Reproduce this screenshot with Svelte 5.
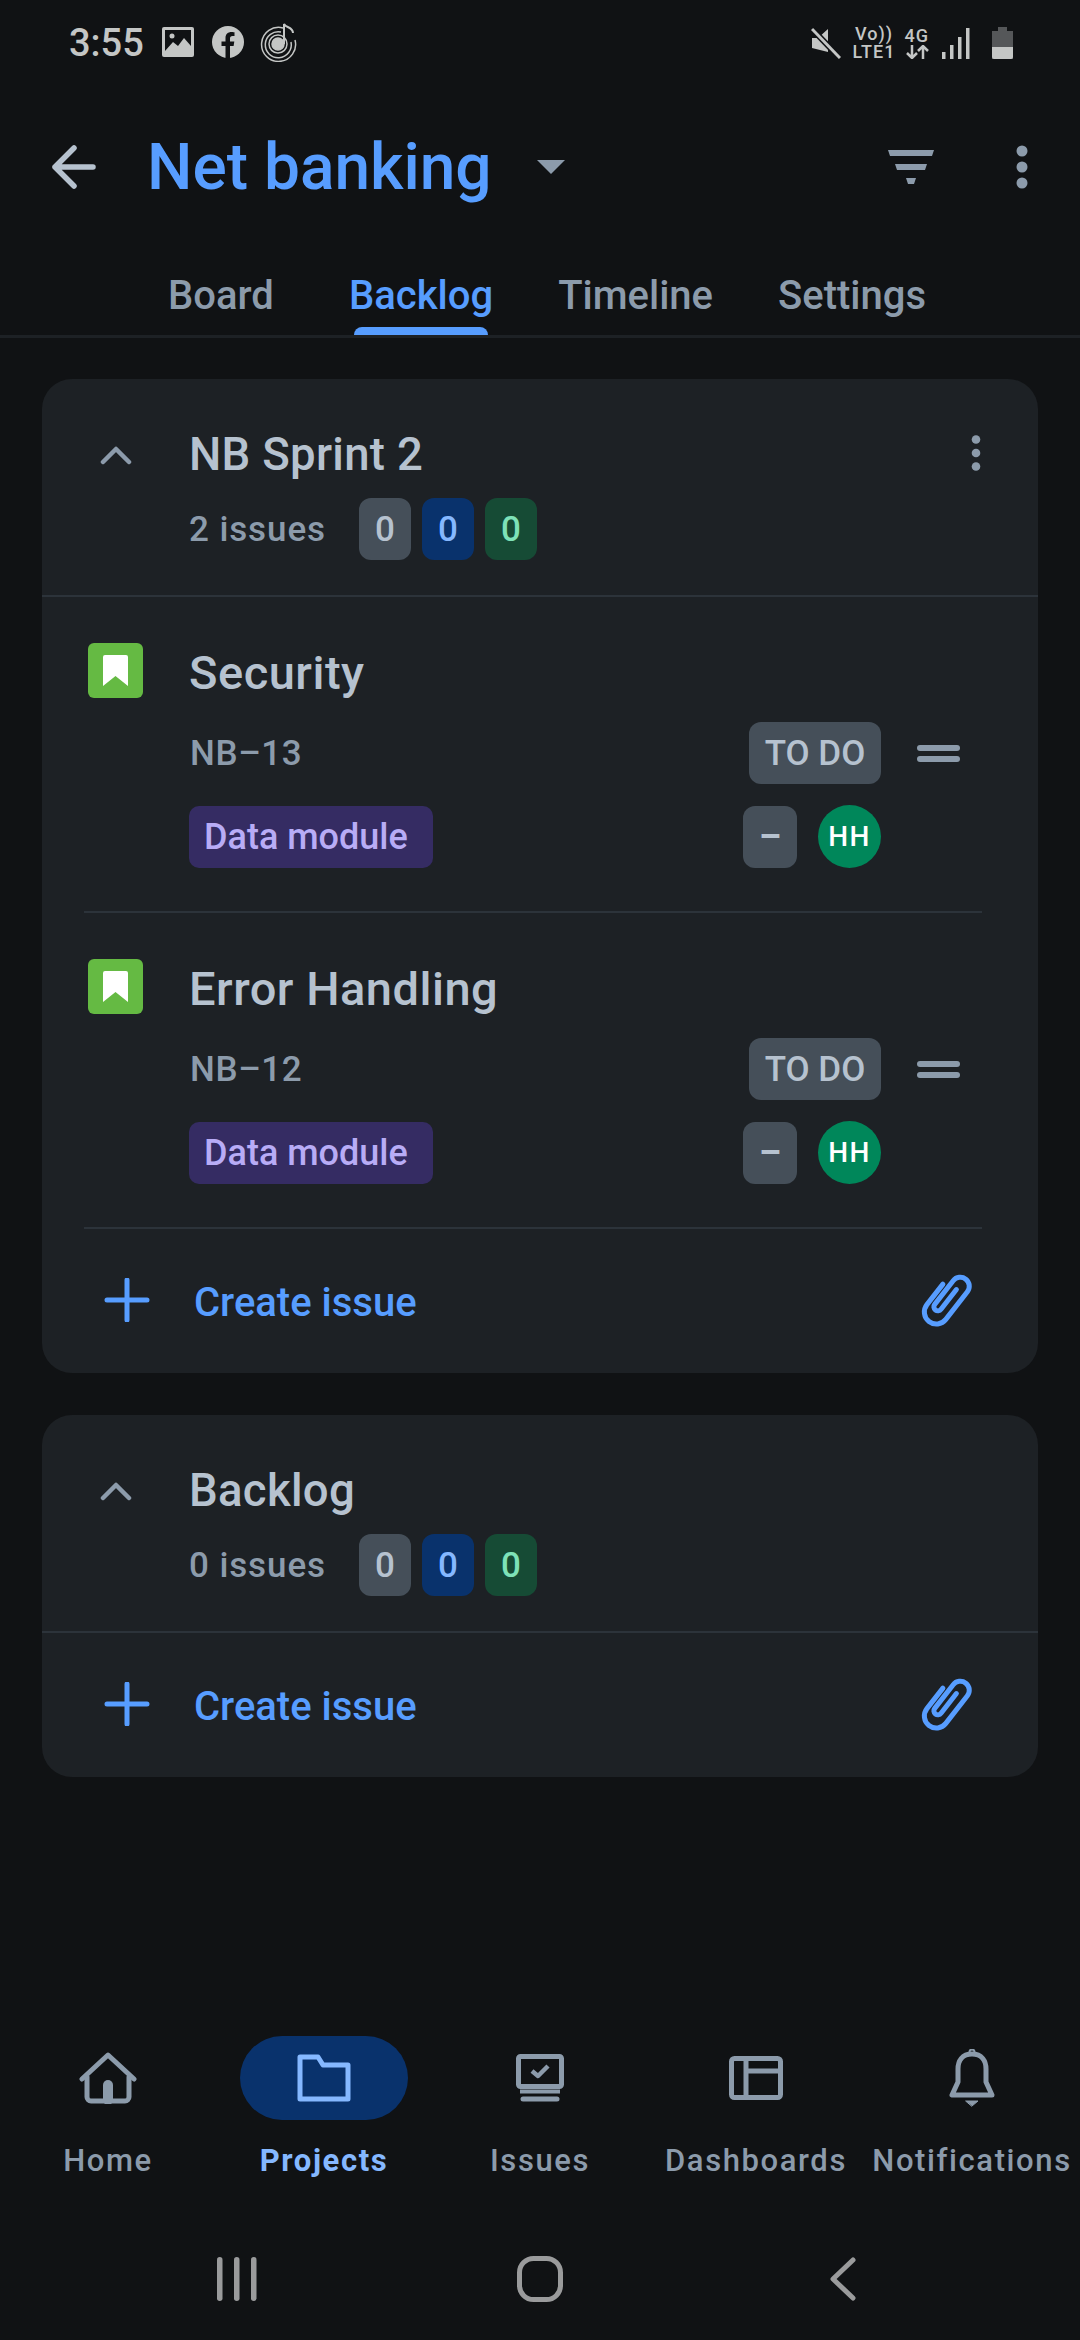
<script>
  const issues = [
    { title: 'Security', key: 'NB–13' },
    { title: 'Error Handling', key: 'NB–12' }
  ];
</script>

{#snippet counts()}
  <span class="count grey">0</span>
  <span class="count blue">0</span>
  <span class="count green">0</span>
{/snippet}

{#snippet createRow()}
  <div class="create">
    <svg class="plus" width="46" height="44" viewBox="0 0 46 44" fill="none" stroke="#579dff" stroke-width="5" stroke-linecap="round">
      <path d="M23 2V42M3 22H43" />
    </svg>
    <span class="create-label">Create issue</span>
    <svg class="clip" width="56" height="56" viewBox="0 0 56 56" fill="none" stroke="#579dff" stroke-width="5" stroke-linecap="round" stroke-linejoin="round">
      <g transform="rotate(38 28 28)">
        <path d="M15 18V44a12 12 0 0 0 24 0V9a9 9 0 0 0 -18 0V39a4 4 0 0 0 8 0V14" transform="translate(0 0)" />
      </g>
    </svg>
  </div>
{/snippet}

{#snippet chevron()}
  <svg class="chev" width="32" height="20" viewBox="0 0 32 20" fill="none" stroke="#8c9bab" stroke-width="4.500" stroke-linecap="round" stroke-linejoin="round">
    <path d="M3 17L16 4L29 17" />
  </svg>
{/snippet}

<div class="page">
  <div class="status">
    <span class="time">3:55</span>
    <svg class="s-img" width="32" height="30" viewBox="0 0 32 30">
      <rect width="32" height="30" rx="2" fill="#c4c6c5" />
      <rect x="3" y="3" width="26" height="24" fill="#101214" />
      <path d="M3 24L11 15L16 19L22 11L29 19V27H3Z" fill="#c4c6c5" />
      <circle cx="10" cy="9" r="2.500" fill="#c4c6c5" />
    </svg>
    <svg class="s-fb" width="32" height="32" viewBox="0 0 32 32">
      <circle cx="16" cy="16" r="16" fill="#c4c6c5" />
      <path d="M13.500 32V20H9.500V15.500H13.500V12C13.500 8 16 6 19.500 6C21 6 22.500 6.300 22.500 6.300V10H20.500C18.700 10 18 11 18 12.300V15.500H22.300L21.600 20H18V32Z" fill="#101214" />
    </svg>
    <svg class="s-music" width="38" height="40" viewBox="0 0 38 40" fill="none" stroke="#c4c6c5" stroke-width="1.500">
      <path d="M24 6A17 17 0 1 0 36 18" />
      <path d="M22 10A13 13 0 1 0 32 20" />
      <circle cx="19" cy="22" r="9" />
      <circle cx="19" cy="22" r="6" fill="#c4c6c5" />
      <path d="M25 22V2C27 6 34 5 34 11" stroke-width="2" />
    </svg>
    <div class="status-right">
      <svg width="30" height="32" viewBox="0 0 30 32">
        <path d="M1 11H7L17 2V25L1 21Z" fill="#c4c6c5" />
        <path d="M1 2L29 31" stroke="#101214" stroke-width="6" />
        <path d="M1 2L29 31" stroke="#c4c6c5" stroke-width="3" />
      </svg>
      <div class="vo"><span>Vo))</span><span>LTE1</span></div>
      <div class="fourg"><span>4G</span>
        <svg width="24" height="14" viewBox="0 0 24 14" fill="none" stroke="#c4c6c5" stroke-width="2.500"><path d="M7 0V12M2 8L7 13L12 8M18 14V2M13 6L18 1L23 6" /></svg>
      </div>
      <svg width="28" height="31" viewBox="0 0 28 31" fill="#c4c6c5">
        <rect x="0" y="24" width="3.500" height="7" /><rect x="8" y="17" width="3.500" height="14" /><rect x="16" y="9" width="3.500" height="22" /><rect x="24" y="0" width="3.500" height="31" />
      </svg>
      <svg width="21" height="32" viewBox="0 0 21 32">
        <path d="M6 0H15V4H21V32H0V4H6Z" fill="#555759" />
        <path d="M0 20H21V30a2 2 0 0 1 -2 2H2a2 2 0 0 1 -2 -2Z" fill="#c4c6c5" />
      </svg>
    </div>
  </div>

  <header class="appbar">
    <svg class="back" width="44" height="44" viewBox="0 0 44 44" fill="none" stroke="#b6c2cf" stroke-width="5.500" stroke-linecap="round" stroke-linejoin="round">
      <path d="M3 22H41M22 3L3 22L22 41" />
    </svg>
    <h1>Net banking</h1>
    <svg class="caret" width="28" height="14" viewBox="0 0 28 14"><path d="M0 0H28L14 14Z" fill="#8c9bab" /></svg>
    <svg class="filter" width="46" height="34" viewBox="0 0 46 34" fill="#8c9bab">
      <path d="M0 0H46L44 6H2Z" /><path d="M7 14H39L37 20H9Z" /><path d="M18 28H28L26 34H20Z" />
    </svg>
    <svg class="kebab" width="12" height="44" viewBox="0 0 12 44" fill="#8c9bab">
      <circle cx="6" cy="6" r="5.500" /><circle cx="6" cy="22" r="5.500" /><circle cx="6" cy="38" r="5.500" />
    </svg>
  </header>

  <nav class="tabs">
    <span class="tab">Board</span>
    <span class="tab active">Backlog</span>
    <span class="tab">Timeline</span>
    <span class="tab">Settings</span>
  </nav>

  <main class="cards">
    <section class="card">
      <div class="card-head">
        {@render chevron()}
        <div class="head-text">
          <h2>NB Sprint 2</h2>
          <div class="sub"><span class="sub-label">2 issues</span>{@render counts()}</div>
        </div>
        <svg class="card-kebab" width="10" height="36" viewBox="0 0 10 36" fill="#8c9bab">
          <circle cx="5" cy="4.500" r="4.300" /><circle cx="5" cy="18" r="4.300" /><circle cx="5" cy="31.500" r="4.300" />
        </svg>
      </div>
      {#each issues as issue}
        <article class="issue">
          <span class="story">
            <svg width="25" height="32" viewBox="0 0 25 32"><path d="M2 0H23a2 2 0 0 1 2 2V31L12.500 21L0 31V2a2 2 0 0 1 2 -2Z" fill="#fff" /></svg>
          </span>
          <div class="issue-body">
            <h3>{issue.title}</h3>
            <div class="line-one">
              <span class="key">{issue.key}</span>
              <span class="todo">TO DO</span>
              <span class="prio"><i></i><i></i></span>
            </div>
            <div class="line-two">
              <span class="tag">Data module</span>
              <span class="points">–</span>
              <span class="avatar">HH</span>
            </div>
          </div>
        </article>
      {/each}
      {@render createRow()}
    </section>

    <section class="card">
      <div class="card-head">
        {@render chevron()}
        <div class="head-text">
          <h2>Backlog</h2>
          <div class="sub"><span class="sub-label">0 issues</span>{@render counts()}</div>
        </div>
      </div>
      {@render createRow()}
    </section>
  </main>

  <nav class="bottom">
    <div class="item">
      <span class="pill">
        <svg width="58" height="52" viewBox="0 0 58 52" fill="none" stroke="#8c9bab" stroke-width="5" stroke-linecap="round" stroke-linejoin="round">
          <path d="M3 27L29 3L55 27" />
          <path d="M8 25V45a4 4 0 0 0 4 4H46a4 4 0 0 0 4 -4V25" />
          <path d="M29 33V48" stroke-width="10" stroke-linecap="round" />
        </svg>
      </span>
      <span class="label">Home</span>
    </div>
    <div class="item current">
      <span class="pill on">
        <svg width="54" height="48" viewBox="0 0 54 48" fill="none" stroke="#85b8ff" stroke-width="5" stroke-linejoin="round">
          <path d="M3 3H21L26 11H51V45H3Z" />
        </svg>
      </span>
      <span class="label">Projects</span>
    </div>
    <div class="item">
      <span class="pill">
        <svg width="48" height="48" viewBox="0 0 48 48" fill="none" stroke="#8c9bab" stroke-linejoin="round">
          <rect x="2.500" y="2.500" width="43" height="30" rx="2" stroke-width="5" />
          <path d="M16 17L22 22L32 12" stroke-width="4.500" />
          <path d="M4 37.500H44" stroke-width="4" />
          <path d="M7 45H41" stroke-width="5" stroke-linecap="round" />
        </svg>
      </span>
      <span class="label">Issues</span>
    </div>
    <div class="item">
      <span class="pill">
        <svg width="54" height="44" viewBox="0 0 54 44" fill="none" stroke="#8c9bab" stroke-width="5" stroke-linejoin="round">
          <rect x="2.500" y="2.500" width="49" height="39" rx="3" />
          <path d="M17 3V41M17 15H51" />
        </svg>
      </span>
      <span class="label">Dashboards</span>
    </div>
    <div class="item">
      <span class="pill">
        <svg width="46" height="58" viewBox="0 0 46 58" fill="none" stroke="#8c9bab" stroke-width="5" stroke-linejoin="round" stroke-linecap="round">
          <path d="M23 5C13 5 9 12 9 20V33L3 46H43L37 33V20C37 12 33 5 23 5Z" />
          <circle cx="23" cy="3" r="1" />
          <path d="M17 52H29L23 57Z" fill="#8c9bab" stroke-width="1" />
        </svg>
      </span>
      <span class="label">Notifications</span>
    </div>
  </nav>

  <div class="sysnav">
    <svg width="40" height="44" viewBox="0 0 40 44" fill="#9a9b9c">
      <rect x="0" y="0" width="5.500" height="44" rx="2.700" /><rect x="17" y="0" width="5.500" height="44" rx="2.700" /><rect x="34" y="0" width="5.500" height="44" rx="2.700" />
    </svg>
    <svg width="46" height="46" viewBox="0 0 46 46" fill="none" stroke="#9a9b9c" stroke-width="5"><rect x="2.500" y="2.500" width="41" height="41" rx="14" /></svg>
    <svg width="26" height="44" viewBox="0 0 26 44" fill="none" stroke="#9a9b9c" stroke-width="5" stroke-linecap="round" stroke-linejoin="round"><path d="M23 3L3 22L23 41" /></svg>
  </div>
</div>

<style>
  :global(body) {
    margin: 0;
    background: #101214;
  }
  .page {
    width: 1080px;
    height: 2340px;
    display: flex;
    flex-direction: column;
    background: #101214;
    font-family: Roboto, sans-serif;
    color: #b6c2cf;
    overflow: hidden;
  }
  h1, h2, h3 { margin: 0; }

  .status {
    height: 86px;
    box-sizing: border-box;
    padding: 0 67px 0 69px;
    display: flex;
    align-items: center;
    color: #c4c6c5;
    flex: none;
  }
  .time { font-size: 38px; line-height: 1; font-weight: 500; }
  .s-img { margin-left: 18px; margin-top: -2px; }
  .s-fb { margin-left: 18px; margin-top: -2px; }
  .s-music { margin-left: 15px; margin-top: -3px; }
  .status-right { margin-left: auto; display: flex; align-items: center; }
  .vo, .fourg { display: flex; flex-direction: column; align-items: center; font-size: 18px; line-height: 18px; font-weight: 500; letter-spacing: 1px; }
  .vo { margin-left: 12px; }
  .fourg { margin-left: 9px; }
  .status-right > svg:nth-of-type(2) { margin-left: 13px; }
  .status-right > svg:nth-of-type(3) { margin-left: 22px; }

  .appbar {
    height: 158px;
    flex: none;
    display: flex;
    align-items: center;
    padding: 3px 0 0 52px;
    box-sizing: border-box;
  }
  .appbar h1 {
    margin: 2px 0 0 51px;
    font-size: 64px;
    line-height: 72px;
    font-weight: 500;
    color: #579dff;
    white-space: nowrap;
  }
  .caret { margin-left: 45px; }
  .filter { margin-left: auto; }
  .kebab { margin-left: 82px; margin-right: 52px; }

  .tabs {
    flex: none;
    height: 94px;
    box-sizing: border-box;
    border-bottom: 3px solid #1d2125;
    display: flex;
    gap: 65px;
    padding-left: 158px;
  }
  .tab {
    min-width: 126px;
    text-align: center;
    font-size: 40px;
    font-weight: 500;
    line-height: 46px;
    color: #8c9bab;
    padding-top: 29px;
    position: relative;
    white-space: nowrap;
  }
  .tab.active { color: #579dff; }
  .tab.active::after {
    content: '';
    position: absolute;
    left: 50%;
    margin-left: -67px;
    bottom: 0;
    width: 134px;
    height: 8px;
    border-radius: 8px 8px 0 0;
    background: #579dff;
  }

  .cards {
    flex: 1;
    padding: 41px 42px 0;
    display: flex;
    flex-direction: column;
    gap: 42px;
  }
  .card {
    background: #1d2125;
    border-radius: 30px;
  }
  .card-head {
    height: 218px;
    box-sizing: border-box;
    border-bottom: 2px solid #2c333a;
    display: flex;
    align-items: flex-start;
    padding: 46px 57px 0 58px;
  }
  .chev { margin-top: 20px; }
  .head-text { margin-left: 57px; }
  h2 {
    font-size: 45.5px;
    line-height: 60px;
    font-weight: 500;
    letter-spacing: 0.3px;
    white-space: nowrap;
  }
  .sub { display: flex; align-items: center; gap: 11px; margin-top: 13px; }
  .sub-label {
    width: 159px;
    font-size: 35px;
    font-weight: 500;
    letter-spacing: 0.9px;
    color: #8c9bab;
    white-space: nowrap;
  }
  .count {
    width: 52px;
    height: 62px;
    border-radius: 12px;
    display: flex;
    align-items: center;
    justify-content: center;
    font-size: 35px;
    font-weight: 500;
  }
  .grey { background: #454f59; color: #b6c2cf; }
  .blue { background: #09326c; color: #85b8ff; }
  .green { background: #164b35; color: #7ee2b8; }
  .card-kebab { margin-left: auto; margin-top: 10px; }

  .issue {
    margin: 0 56px 0 42px;
    padding: 46px 0 44px;
    display: flex;
    border-bottom: 2px solid #2c333a;
    height: 316px;
    box-sizing: border-box;
  }
  .story {
    flex: none;
    margin-left: 4px;
    width: 55px;
    height: 55px;
    border-radius: 6px;
    background: #65ba43;
    display: flex;
    align-items: center;
    justify-content: center;
  }
  .issue-body { flex: 1; margin-left: 47px; padding-right: 22px; }
  h3 {
    font-size: 47px;
    line-height: 55px;
    font-weight: 500;
    letter-spacing: 0.5px;
    white-space: nowrap;
    margin-top: 2px;
    margin-left: -1px;
  }
  .line-one { display: flex; align-items: center; margin-top: 22px; height: 62px; }
  .key { font-size: 35px; font-weight: 500; letter-spacing: 0.6px; color: #8c9bab; }
  .todo {
    margin-left: auto;
    height: 62px;
    width: 132px;
    border-radius: 12px;
    background: #454f59;
    display: flex;
    align-items: center;
    justify-content: center;
    font-size: 35px;
    font-weight: 500;
    color: #b6c2cf;
    white-space: nowrap;
  }
  .prio { margin-left: 36px; width: 43px; display: flex; flex-direction: column; gap: 5px; }
  .prio i { display: block; height: 6px; border-radius: 3px; background: #8c9bab; }
  .line-two { display: flex; align-items: center; margin-top: 21px; padding-right: 79px; }
  .tag {
    height: 62px;
    box-sizing: border-box;
    padding: 0 25px 0 15px;
    border-radius: 10px;
    background: #352c63;
    color: #b8acf6;
    font-size: 36px;
    font-weight: 500;
    display: flex;
    align-items: center;
    white-space: nowrap;
    margin-left: -1px;
  }
  .points {
    margin-left: auto;
    width: 54px;
    height: 62px;
    border-radius: 12px;
    background: #454f59;
    display: flex;
    align-items: center;
    justify-content: center;
    font-size: 35px;
    font-weight: 700;
    color: #b6c2cf;
  }
  .avatar {
    margin-left: 21px;
    width: 63px;
    height: 63px;
    border-radius: 50%;
    background: #00875a;
    display: flex;
    align-items: center;
    justify-content: center;
    font-size: 28px;
    font-weight: 500;
    letter-spacing: 1.5px;
    color: #fff;
  }

  .create {
    height: 144px;
    display: flex;
    align-items: center;
    padding: 0 63px 0 62px;
  }
  .plus { margin-top: -2px; }
  .create-label {
    margin-left: 44px;
    font-size: 40px;
    font-weight: 500;
    color: #579dff;
    margin-top: 3px;
  }
  .clip { margin-left: auto; margin-top: -2px; }

  .bottom {
    flex: none;
    height: 182px;
    display: grid;
    grid-template-columns: repeat(5, 216px);
  }
  .item { display: flex; flex-direction: column; align-items: center; }
  .pill {
    width: 168px;
    height: 84px;
    border-radius: 42px;
    display: flex;
    align-items: center;
    justify-content: center;
  }
  .pill.on { background: #09326c; }
  .label {
    margin-top: 23px;
    font-size: 31px;
    line-height: 36px;
    letter-spacing: 1.6px;
    font-weight: 500;
    color: #8c9bab;
    white-space: nowrap;
  }
  .current .label { color: #85b8ff; font-weight: 700; }

  .sysnav {
    flex: none;
    height: 122px;
    display: grid;
    grid-template-columns: repeat(3, 303px);
    justify-content: center;
    justify-items: center;
    align-items: center;
  }
</style>
